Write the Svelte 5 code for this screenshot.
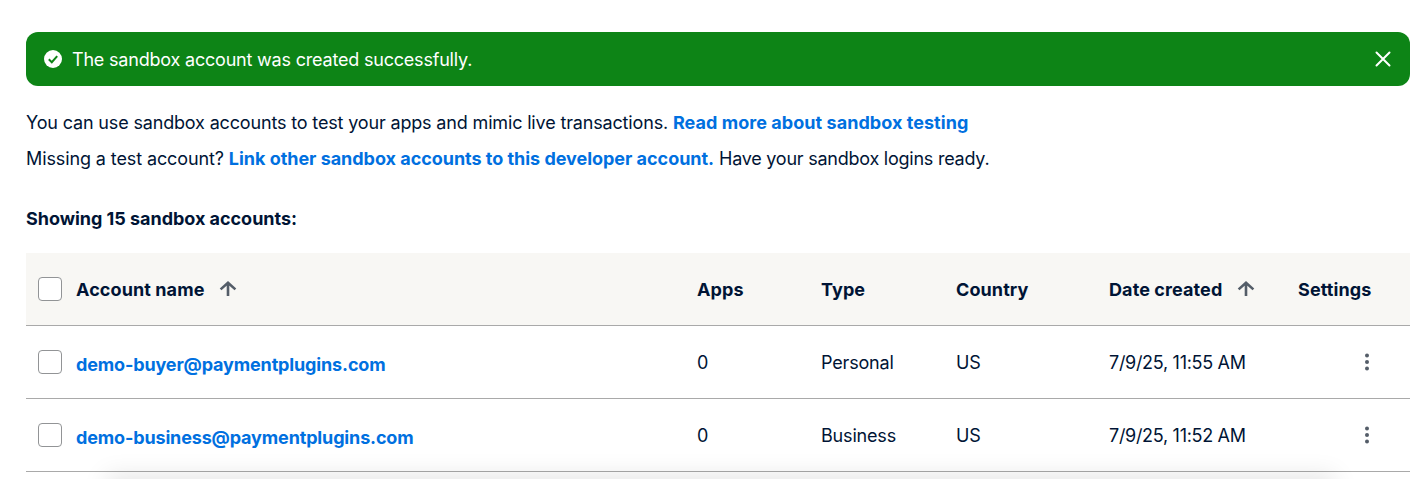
<script>
  const rows = [
    { email: 'demo-buyer@paymentplugins.com', apps: 0, type: 'Personal', country: 'US', date: '7/9/25, 11:55 AM' },
    { email: 'demo-business@paymentplugins.com', apps: 0, type: 'Business', country: 'US', date: '7/9/25, 11:52 AM' }
  ];
</script>

{#snippet arrow()}
  <svg class="arrow" width="18" height="18" viewBox="0 0 18 18" aria-hidden="true">
    <path d="M9 16V3.5M1.6 9.4 9 2.8l7.4 6.6" fill="none" stroke="#545d68" stroke-width="2.6" />
  </svg>
{/snippet}

<main class="page">
  <div class="banner">
    <svg width="18" height="18" viewBox="0 0 18 18" aria-hidden="true">
      <circle cx="9" cy="9" r="9" fill="#fff" />
      <path d="M4.8 9.3 7.8 12.2 13.2 6.2" fill="none" stroke="#0d8416" stroke-width="2" />
    </svg>
    <span class="banner-text">The sandbox account was created successfully.</span>
    <svg class="close" width="16" height="16" viewBox="0 0 16 16" aria-hidden="true">
      <path d="M1.5 1.5l13 13M14.5 1.5l-13 13" stroke="#fff" stroke-width="2" stroke-linecap="round" />
    </svg>
  </div>

  <p class="line first">You can use sandbox accounts to test your apps and mimic live transactions. <a href="#r">Read more about sandbox testing</a></p>
  <p class="line second">Missing a test account? <a href="#l">Link other sandbox accounts to this developer account.</a> <span class="tail">Have your sandbox logins ready.</span></p>
  <h2>Showing 15 sandbox accounts:</h2>

  <div class="table">
    <div class="row head">
      <div class="name"><span class="check"></span><span>Account name</span>{@render arrow()}</div>
      <div>Apps</div>
      <div>Type</div>
      <div>Country</div>
      <div class="date"><span>Date created</span>{@render arrow()}</div>
      <div>Settings</div>
    </div>
    {#each rows as r}
      <div class="row">
        <div class="name"><span class="check lift"></span><a class="email" href="#a">{r.email}</a></div>
        <div>{r.apps}</div>
        <div>{r.type}</div>
        <div>{r.country}</div>
        <div class="stamp">{r.date}</div>
        <div class="more">
          <svg width="6" height="18" viewBox="0 0 6 18" aria-hidden="true">
            <circle cx="3" cy="2.5" r="2" fill="#545d68" />
            <circle cx="3" cy="9" r="2" fill="#545d68" />
            <circle cx="3" cy="15.5" r="2" fill="#545d68" />
          </svg>
        </div>
      </div>
    {/each}
  </div>
  <div class="shade"></div>
</main>

<style>
  :global(body) {
    margin: 0;
    background: #fff;
  }
  .page {
    position: relative;
    height: 479px;
    overflow: hidden;
    box-sizing: border-box;
    padding: 32px 11px 0 26px;
    font-family: Inter, "Liberation Sans", sans-serif;
    font-size: 18px;
    letter-spacing: -0.18px;
    color: #001435;
  }
  .banner {
    display: flex;
    align-items: center;
    height: 54px;
    padding: 0 18px;
    gap: 10px;
    background: #0d8416;
    border-radius: 12px;
    color: #fff;
  }
  .banner-text {
    flex: 1;
    letter-spacing: -0.2px;
  }
  .close {
    margin-right: 1px;
  }
  .line {
    margin: 0;
    line-height: 24px;
    letter-spacing: -0.16px;
  }
  .first {
    margin-top: 25px;
  }
  .second {
    margin-top: 12px;
    letter-spacing: -0.11px;
  }
  .tail {
    letter-spacing: -0.24px;
  }
  a {
    color: #0070e0;
    font-weight: 700;
    text-decoration: none;
    letter-spacing: 0.05px;
  }
  .second a {
    letter-spacing: -0.03px;
  }
  .email {
    letter-spacing: -0.15px;
    padding-top: 4px;
  }
  h2 {
    margin: 36px 0 0;
    font-size: 18px;
    line-height: 24px;
    font-weight: 700;
    letter-spacing: -0.03px;
  }
  .table {
    margin-top: 22px;
  }
  .row {
    display: grid;
    grid-template-columns: 671px 124px 135px 153px 189px 112px;
    align-items: center;
    height: 72px;
    border-bottom: 1px solid #a9a9a9;
  }
  .head {
    background: #f8f7f4;
    font-weight: 700;
    letter-spacing: 0.1px;
  }
  .name {
    display: flex;
    align-items: center;
    padding-left: 12px;
  }
  .name .arrow {
    margin-left: 14px;
  }
  .date {
    display: flex;
    align-items: center;
  }
  .stamp {
    letter-spacing: -0.3px;
  }
  .check {
    box-sizing: border-box;
    width: 24px;
    height: 24px;
    margin-right: 14px;
    background: #fff;
    border: 1px solid #929496;
    border-radius: 4px;
  }
  .lift {
    margin-top: -1px;
  }
  .arrow {
    margin-left: 15px;
  }
  .more {
    display: flex;
    padding-left: 66px;
  }
  .shade {
    position: absolute;
    left: 110px;
    right: 90px;
    top: 479px;
    height: 30px;
    box-shadow: 0 0 24px 4px rgba(0, 0, 0, 0.1);
  }
</style>
